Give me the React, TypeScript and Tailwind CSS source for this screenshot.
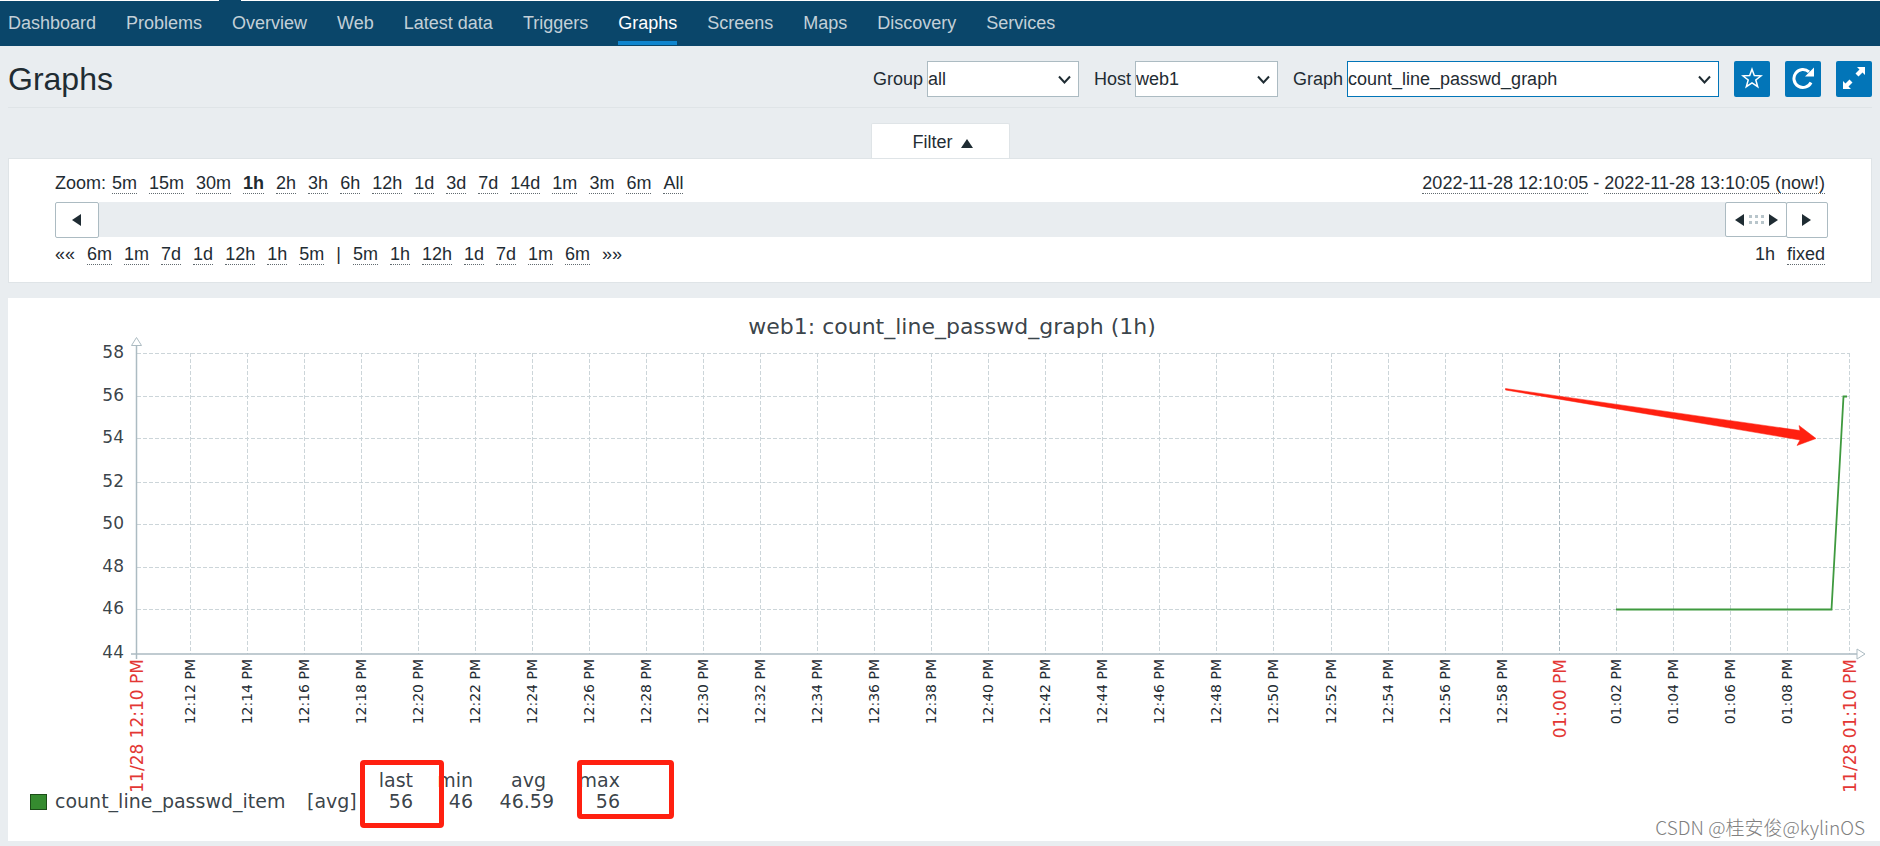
import { useState } from 'react';
import type { ReactNode } from 'react';

const menu = ['Dashboard', 'Problems', 'Overview', 'Web', 'Latest data', 'Triggers', 'Graphs', 'Screens', 'Maps', 'Discovery', 'Services'];

const zoomLevels = ['5m', '15m', '30m', '1h', '2h', '3h', '6h', '12h', '1d', '3d', '7d', '14d', '1m', '3m', '6m', 'All'];
const stepsBack = ['6m', '1m', '7d', '1d', '12h', '1h', '5m'];
const stepsForward = ['5m', '1h', '12h', '1d', '7d', '1m', '6m'];

// Y scale of the chart, value -> line position
const yTicks = [
    { value: 58, y: 55 },
    { value: 56, y: 98 },
    { value: 54, y: 140 },
    { value: 52, y: 184 },
    { value: 50, y: 226 },
    { value: 48, y: 269 },
    { value: 46, y: 311 },
];
const AXIS_Y = 356;

const xTicks = Array.from({ length: 29 }, (_, i) => {
    const minutes = 12 + i * 2;
    const label = minutes < 60
        ? `12:${String(minutes).padStart(2, '0')} PM`
        : `01:${String(minutes - 60).padStart(2, '0')} PM`;
    return { label, x: Math.floor(182 + i * 57.05), main: minutes === 60 };
});

function DottedLink({ children, bold }: { children: ReactNode; bold?: boolean }) {
    return (
        <a href="#" className={`border-b border-dotted border-[#1f2c33]/70 ${bold ? 'font-bold' : ''}`}>
            {children}
        </a>
    );
}

function Picker({ id, label, options, width, active }: {
    id: string;
    label: string;
    options: string[];
    width: string;
    active?: boolean;
}) {
    return (
        <div className="flex items-center gap-1">
            <label htmlFor={id}>{label}</label>
            <div className={`relative ${width}`}>
                <select
                    id={id}
                    className={`h-9 w-full appearance-none border bg-white outline-none ${active ? 'border-[#0275b8]' : 'border-[#acbbc2]'}`}
                >
                    {options.map((option) => (
                        <option key={option}>{option}</option>
                    ))}
                </select>
                <svg className="pointer-events-none absolute top-[14px] right-2 h-[10px] w-[13px]" viewBox="0 0 13 10" fill="none" stroke="#1f2c33" strokeWidth="2">
                    <path d="M1 1.500l5.500 6 5.500-6" />
                </svg>
            </div>
        </div>
    );
}

function IconButton({ title, children }: { title: string; children: ReactNode }) {
    return (
        <button title={title} className="flex h-9 w-9 items-center justify-center rounded-xs bg-[#0275b8] pb-[2px] text-white">
            {children}
        </button>
    );
}

function Chart() {
    return (
        <svg className="block w-full overflow-visible font-['DejaVu_Sans',sans-serif]" viewBox="0 0 1872 472" fill="#1f2c33">
            <text x="944" y="36" fontSize="22" textAnchor="middle" fillOpacity="0.9">web1: count_line_passwd_graph (1h)</text>

            {/* grid */}
            <g stroke="#ccd5d9" strokeWidth="1" strokeDasharray="4 2" shapeRendering="crispEdges">
                {yTicks.map((tick) => (
                    <line key={tick.value} x1="129" x2="1841" y1={tick.y} y2={tick.y} />
                ))}
                {xTicks.map((tick) => (
                    <line key={tick.label} x1={tick.x} x2={tick.x} y1="55" y2={AXIS_Y} stroke={tick.main ? '#acbbc2' : undefined} />
                ))}
                <line x1="1841" x2="1841" y1="55" y2={AXIS_Y} />
            </g>

            {/* axes */}
            <g fill="white" stroke="#acbbc2">
                <path d="M128.500 48V361M123 356H1849" fill="none" strokeWidth="1.500" />
                <path d="M123.500 47.500h10l-5-8zM1849 351v10l8-5z" />
            </g>

            {/* labels */}
            <g fontSize="17" textAnchor="end" fillOpacity="0.9">
                {yTicks.map((tick) => (
                    <text key={tick.value} x="116" y={tick.y + 5}>{tick.value}</text>
                ))}
                <text x="116" y="360">44</text>
            </g>
            {xTicks.map((tick) => (
                <text
                    key={tick.label}
                    transform={`translate(${tick.x + (tick.main ? 7 : 5)} 361) rotate(-90)`}
                    textAnchor="end"
                    fontSize={tick.main ? 17 : 14}
                    fill={tick.main ? '#e33734' : '#1f2c33'}
                >
                    {tick.label}
                </text>
            ))}
            <g fontSize="17" textAnchor="end" fill="#e33734">
                <text transform="translate(135 361) rotate(-90)">11/28 12:10 PM</text>
                <text transform="translate(1848 361) rotate(-90)">11/28 01:10 PM</text>
            </g>

            {/* data */}
            <path d="M1608 311.500H1823.500L1835.500 98.500H1839" fill="none" stroke="#3f9a3f" strokeWidth="1.800" />

            <path d="M1497.500 90.500L1792 132.500l-1-5 17 13-19 7 3-5.500L1497.500 92z" fill="#ff2010" stroke="#ff2010" strokeWidth="0.500" />
        </svg>
    );
}

function Legend() {
    return (
        <div className="relative pb-[29px] pl-[22px]">
            <table className="table-fixed border-collapse font-['DejaVu_Sans',sans-serif] text-[19px] leading-[21px] text-[#1f2c33]/90 [&_td]:p-0 [&_th]:p-0 [&_th]:font-normal">
                <colgroup>
                    <col className="w-[25px]" />
                    <col className="w-[252px]" />
                    <col className="w-[50px]" />
                    <col className="w-[56px]" />
                    <col className="w-[60px]" />
                    <col className="w-[81px]" />
                    <col className="w-[66px]" />
                </colgroup>
                <thead>
                    <tr className="text-right">
                        <td />
                        <td />
                        <td />
                        <th>last</th>
                        <th>min</th>
                        <th><span className="pr-2">avg</span></th>
                        <th>max</th>
                    </tr>
                </thead>
                <tbody>
                    <tr className="text-right">
                        <td><div className="h-4 w-[17px] border border-[#1c4d18] bg-[#358b2f]" /></td>
                        <td className="text-left">count_line_passwd_item</td>
                        <td className="text-left">[avg]</td>
                        <td>56</td>
                        <td>46</td>
                        <td>46.59</td>
                        <td>56</td>
                    </tr>
                </tbody>
            </table>
            {/* highlight marks over the last and max columns */}
            <div className="absolute -top-[10px] left-[352px] h-[68px] w-[84px] rounded border-[5px] border-[#ff2010]" />
            <div className="absolute -top-[10px] left-[569px] h-[59px] w-[97px] rounded border-[5px] border-[#ff2010]" />
        </div>
    );
}

export default function App() {
    const [current, setCurrent] = useState('Graphs');

    return (
        <div className="min-h-screen bg-[#e9edf0] font-['Liberation_Sans',Arial,sans-serif] text-[18px] leading-6 text-[#1f2c33]">
            <nav className="relative flex h-[46px] gap-[30px] border-t border-white bg-[#0a466a] px-2">
                <span className="absolute -top-px left-[219px] h-px w-[22px] bg-[#0a466a]" />
                {menu.map((item) => (
                    <a
                        key={item}
                        href="#"
                        onClick={() => setCurrent(item)}
                        className={`h-11 border-b-4 pt-[10px] ${item === current ? 'border-[#0f85ce] text-white' : 'border-transparent text-[#c3d0d8]'}`}
                    >
                        {item}
                    </a>
                ))}
            </nav>

            <header className="mx-2 flex items-center justify-between border-b border-[#dfe4e7] pt-[15px] pb-[10px]">
                <h1 className="text-[32px] leading-9">Graphs</h1>
                <div className="flex items-center gap-[15px]">
                    <Picker id="group" label="Group" options={['all']} width="w-[152px]" />
                    <Picker id="host" label="Host" options={['web1']} width="w-[143px]" />
                    <Picker id="graph" label="Graph" options={['count_line_passwd_graph']} width="w-[372px]" active />
                    <IconButton title="Add to favourites">
                        <svg className="h-[22px] w-[22px]" viewBox="0 0 22 22" fill="none" stroke="currentColor" strokeWidth="1.500">
                            <path d="M11 2.200l2.300 6.300 6.900.3-5.400 4.200 1.900 6.700-5.700-3.800-5.700 3.800 1.900-6.700-5.400-4.200 6.900-.3z" />
                        </svg>
                    </IconButton>
                    <IconButton title="Reset">
                        <svg className="h-[22px] w-[22px]" viewBox="0 0 22 22" fill="none" stroke="currentColor" strokeWidth="3">
                            <path d="M19 15.500A9 9 0 1 1 17 4.800" />
                            <path d="M22 .500v9h-9z" fill="currentColor" stroke="none" />
                        </svg>
                    </IconButton>
                    <IconButton title="Fullscreen">
                        <svg className="h-[22px] w-[22px]" viewBox="0 0 22 22" fill="currentColor">
                            <path d="M14 0h8v8l-2.500-2.500-4 4-3-3 4-4zM8 22H0v-8l2.500 2.500 4-4 3 3-4 4z" />
                        </svg>
                    </IconButton>
                </div>
            </header>

            <section className="mx-2 mt-[15px] flex flex-col items-center">
                <button className="-mb-px flex h-9 items-center gap-2 rounded-t-xs border border-b-0 border-[#dfe4e7] bg-white pr-[36px] pl-[41px]">
                    Filter
                    <svg className="mt-1 h-[9px] w-3" viewBox="0 0 12 9" fill="currentColor"><path d="M6 0l6 9H0z" /></svg>
                </button>
                <div className="w-full border border-[#dfe4e7] bg-white px-[46px] pt-[14px] pb-[17px]">
                    <div className="flex justify-between">
                        <div className="flex gap-[6px] leading-5">
                            <span>Zoom:</span>
                            <div className="flex gap-3">
                                {zoomLevels.map((level) => (
                                    <DottedLink key={level} bold={level === '1h'}>{level}</DottedLink>
                                ))}
                            </div>
                        </div>
                        <div className="flex gap-[5px] leading-5">
                            <DottedLink>2022-11-28 12:10:05</DottedLink>
                            -
                            <DottedLink>2022-11-28 13:10:05 (now!)</DottedLink>
                        </div>
                    </div>

                    <div className="mt-2 -mr-[3px] flex h-9 items-start">
                        <button aria-label="Back" className="flex h-9 w-11 items-center justify-center rounded-xs border border-[#acbbc2] bg-white pr-[2px]">
                            <svg className="h-3 w-[9px]" viewBox="0 0 9 12" fill="currentColor"><path d="M9 0v12L0 6z" /></svg>
                        </button>
                        <div className="flex h-[35px] flex-1 justify-end bg-[#e9edf0]">
                            <button aria-label="Period" className="flex w-[62px] items-center justify-center gap-[5px] rounded-xs border border-[#acbbc2] bg-white">
                                <svg className="h-3 w-[9px]" viewBox="0 0 9 12" fill="currentColor"><path d="M9 0v12L0 6z" /></svg>
                                <svg className="h-[10px] w-[15px]" viewBox="0 0 15 10" fill="#b8c5cb">
                                    <path d="M0 0h3v3H0zM6 0h3v3H6zM12 0h3v3h-3zM0 6h3v3H0zM6 6h3v3H6zM12 6h3v3h-3z" />
                                </svg>
                                <svg className="h-3 w-[9px]" viewBox="0 0 9 12" fill="currentColor"><path d="M0 0v12l9-6z" /></svg>
                            </button>
                        </div>
                        <button aria-label="Forward" className="-ml-px flex h-9 w-[42px] items-center justify-center rounded-xs border border-[#acbbc2] bg-white pr-[2px]">
                            <svg className="h-3 w-[9px]" viewBox="0 0 9 12" fill="currentColor"><path d="M0 0v12l9-6z" /></svg>
                        </button>
                    </div>

                    <div className="mt-[6px] flex justify-between leading-5">
                        <div className="flex gap-3">
                            <span>««</span>
                            {stepsBack.map((step) => (
                                <DottedLink key={step}>{step}</DottedLink>
                            ))}
                            <span>|</span>
                            {stepsForward.map((step) => (
                                <DottedLink key={step}>{step}</DottedLink>
                            ))}
                            <span>»»</span>
                        </div>
                        <div className="flex gap-3">
                            <span>1h</span>
                            <DottedLink>fixed</DottedLink>
                        </div>
                    </div>
                </div>
            </section>

            <main className="relative mt-[15px] ml-2 bg-white">
                <Chart />
                <Legend />
                <p className="absolute right-[15px] bottom-[2px] font-['Noto_Sans_CJK_SC',sans-serif] text-[19px] font-light text-[#808080]">
                    CSDN @桂安俊@kylinOS
                </p>
            </main>
        </div>
    );
}
